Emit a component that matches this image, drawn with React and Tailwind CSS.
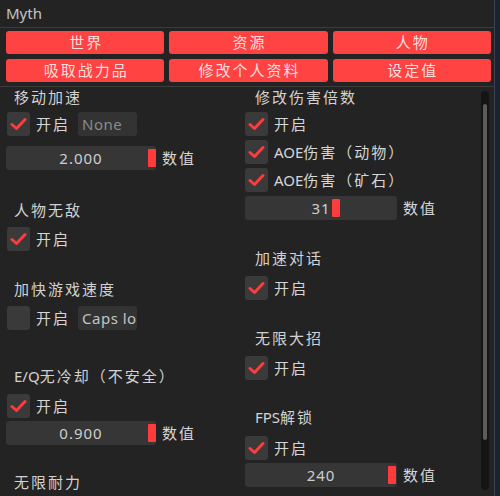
import React from 'react'

const FONT = { fontFamily: '"Noto Sans", "Noto Sans CJK SC", sans-serif' }

function Lat({ children }) {
  return <span className="tracking-normal">{children}</span>
}

function Check({ checked }) {
  return (
    <div className="flex h-[24px] w-[23px] shrink-0 items-center justify-center rounded-[3px] bg-[#3a3a3a]">
      {checked && (
        <svg width="17" height="14" viewBox="0 0 17 14">
          <path d="M2 7.5 L6.5 11.5 L15 2.5" fill="none" stroke="#ff3b3b" strokeWidth="3" strokeLinecap="round" strokeLinejoin="round" />
        </svg>
      )}
    </div>
  )
}

function Toggle({ checked, text = '开启', input, inputMuted, className = '' }) {
  return (
    <div className={`flex h-[24px] items-center ${className}`}>
      <Check checked={checked} />
      <span className="ml-[6px] whitespace-nowrap text-[15px] leading-none tracking-[2px] text-[#d6d6d6]">{text}</span>
      {input && (
        <div
          className={`ml-[8px] flex h-[24px] w-[59px] items-center overflow-hidden whitespace-nowrap rounded-[3px] bg-[#333333] px-[4px] text-[15px] tracking-[0.5px] ${
            inputMuted ? 'text-[#8a8a8a]' : 'text-[#c4c4c4]'
          }`}
        >
          {input}
        </div>
      )}
    </div>
  )
}

function Slider({ value, width, grab, className = '' }) {
  return (
    <div className={`flex h-[24px] items-center ${className}`}>
      <div
        className="relative flex h-[24px] items-center justify-center rounded-[3px] bg-[#363636] text-[15px] text-[#cfcfcf]"
        style={{ width }}
      >
        <span className="tracking-[1px]">{value}</span>
        <div className="absolute top-[3px] h-[18px] w-[8px] rounded-[1px] bg-[#ff3b3b]" style={{ left: grab }} />
      </div>
      <span className="ml-[6px] text-[15px] tracking-[2px] text-[#d6d6d6]">数值</span>
    </div>
  )
}

function Label({ children, className = '', indent = 'pl-[8px]' }) {
  return (
    <div className={`flex h-[20px] items-center whitespace-nowrap text-[15px] leading-none tracking-[2px] text-[#d2d2d2] ${indent} ${className}`}>
      {children}
    </div>
  )
}

function TabButton({ children }) {
  return (
    <div className="flex h-[23px] items-center justify-center rounded-[3px] bg-[#ff4242] pl-[2px] text-[15px] leading-none tracking-[2px] text-[#ffdede]">
      {children}
    </div>
  )
}

export default function App() {
  return (
    <div className="flex h-[496px] w-[500px] bg-[#1b2230]" style={FONT}>
      <div className="flex h-[496px] w-[495px] flex-col overflow-hidden border-r border-[#3b4250] bg-[#232323]">
        <div className="flex h-[27px] items-center px-[6px] text-[15px] text-[#c4c4c4]">Myth</div>
        <div className="h-px bg-[#3c3c3c]" />
        <div className="grid grid-cols-3 gap-x-[5px] gap-y-[5px] px-[6px] pt-[3px] pr-[3px]">
          <TabButton>世界</TabButton>
          <TabButton>资源</TabButton>
          <TabButton>人物</TabButton>
          <TabButton>吸取战力品</TabButton>
          <TabButton>修改个人资料</TabButton>
          <TabButton>设定值</TabButton>
        </div>
        <div className="mt-[4px] h-px bg-[#3c3c3c]" />

        <div className="flex min-h-0 flex-1">
          <div className="flex min-h-0 flex-1 overflow-hidden">
            <div className="flex w-[245px] shrink-0 flex-col pl-[6px]">
              <Label>移动加速</Label>
              <Toggle checked input="None" inputMuted className="mt-[5px] pl-[1px]" />
              <Slider value="2.000" width={150} grab={142} className="mt-[10px]" />
              <Label className="mt-[30px]">人物无敌</Label>
              <Toggle checked className="mt-[7px] pl-[1px]" />
              <Label className="mt-[28px]">加快游戏速度</Label>
              <Toggle input="Caps lo" className="mt-[7px] pl-[1px]" />
              <Label className="mt-[36px]"><Lat>E/Q</Lat>无冷却（不安全）</Label>
              <Toggle checked className="mt-[8px] pl-[1px]" />
              <Slider value="0.900" width={150} grab={142} className="mt-[3px]" />
              <Label className="mt-[27px]">无限耐力</Label>
            </div>
            <div className="flex w-[230px] shrink-0 flex-col">
              <Label indent="pl-[10px]">修改伤害倍数</Label>
              <Toggle checked className="mt-[5px]" />
              <Toggle checked text={<><Lat>AOE</Lat>伤害（动物）</>} className="mt-[4px]" />
              <Toggle checked text={<><Lat>AOE</Lat>伤害（矿石）</>} className="mt-[4px]" />
              <Slider value="31" width={152} grab={87} className="mt-[4px]" />
              <Label indent="pl-[10px]" className="mt-[28px]">加速对话</Label>
              <Toggle checked className="mt-[8px]" />
              <Label indent="pl-[10px]" className="mt-[28px]">无限大招</Label>
              <Toggle checked className="mt-[8px]" />
              <Label indent="pl-[10px]" className="mt-[27px]"><Lat>FPS</Lat>解锁</Label>
              <Toggle checked className="mt-[9px]" />
              <Slider value="240" width={152} grab={143} className="mt-[3px]" />
            </div>
          </div>
          <div className="mr-[5px] mt-[4px] mb-[6px] flex w-[8px] shrink-0 flex-col items-center rounded-full bg-[#141414] pt-[13px] pb-[50px]">
            <div className="w-[4px] flex-1 rounded-full bg-[#5c5c5c]" />
          </div>
        </div>
      </div>
    </div>
  )
}
